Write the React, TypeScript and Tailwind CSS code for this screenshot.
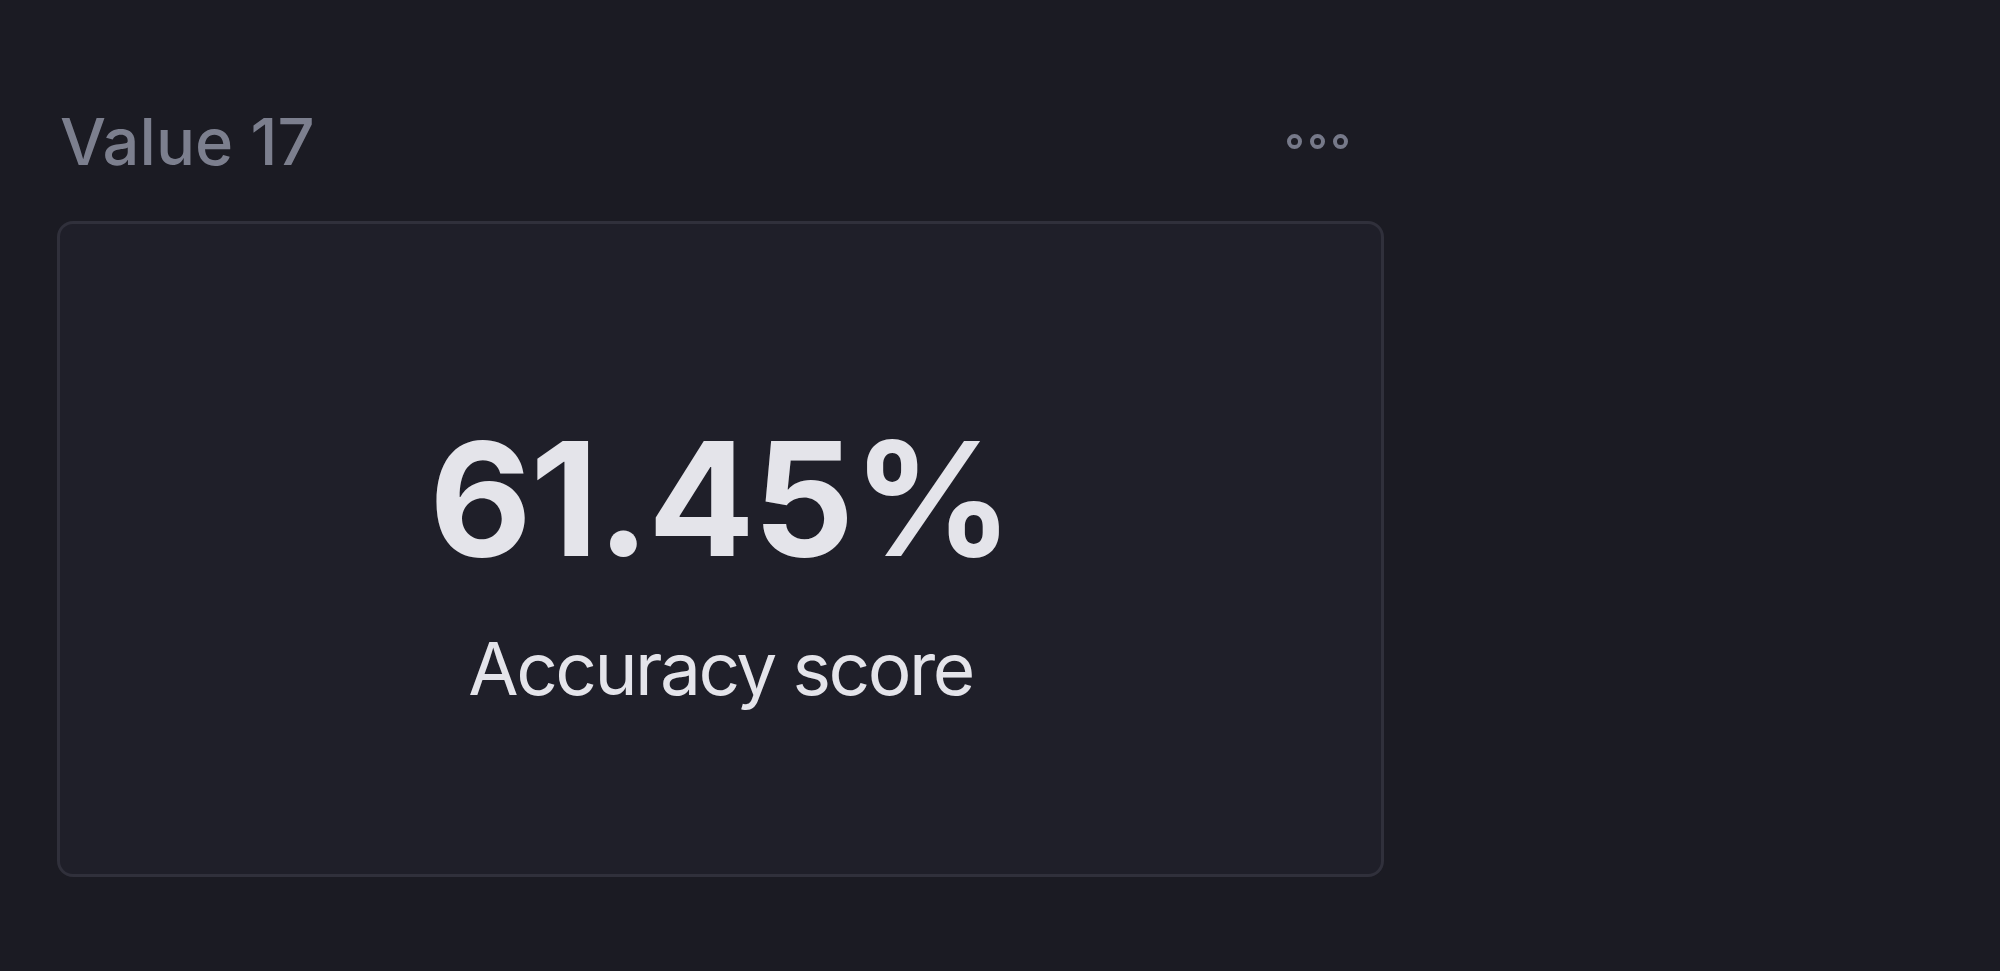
export default function App() {
  return (
    <div className="min-h-[971px] w-full bg-[#1b1b23] pl-[57px] pt-[109px]" style={{ fontFamily: "Inter, 'Noto Sans', sans-serif" }}>
      <div className="w-[1327px]">
        <div className="flex items-center justify-between pl-[3px] pr-[36px]">
          <h2 className="text-[65px] leading-none font-medium text-[#7c7f8e]">Value 17</h2>
          <button className="flex items-center gap-[8px]">
            <span className="h-[15px] w-[15px] rounded-full border-[4px] border-[#767989]" />
            <span className="h-[15px] w-[15px] rounded-full border-[4px] border-[#767989]" />
            <span className="h-[15px] w-[15px] rounded-full border-[4px] border-[#767989]" />
          </button>
        </div>

        <div
          className="mt-[47px] flex h-[656px] flex-col items-center justify-center
                     rounded-[16px] border-[3px] border-[#30303b] bg-[#1f1f29]
                     pt-[26px]"
        >
          <div className="text-[158px] leading-none font-bold tracking-[-0.01em] text-[#e4e4ea]">61.45%</div>
          <div className="mt-[54px] text-[73px] leading-none tracking-[-0.035em] text-[#e4e4ea]">Accuracy score</div>
        </div>
      </div>
    </div>
  )
}
